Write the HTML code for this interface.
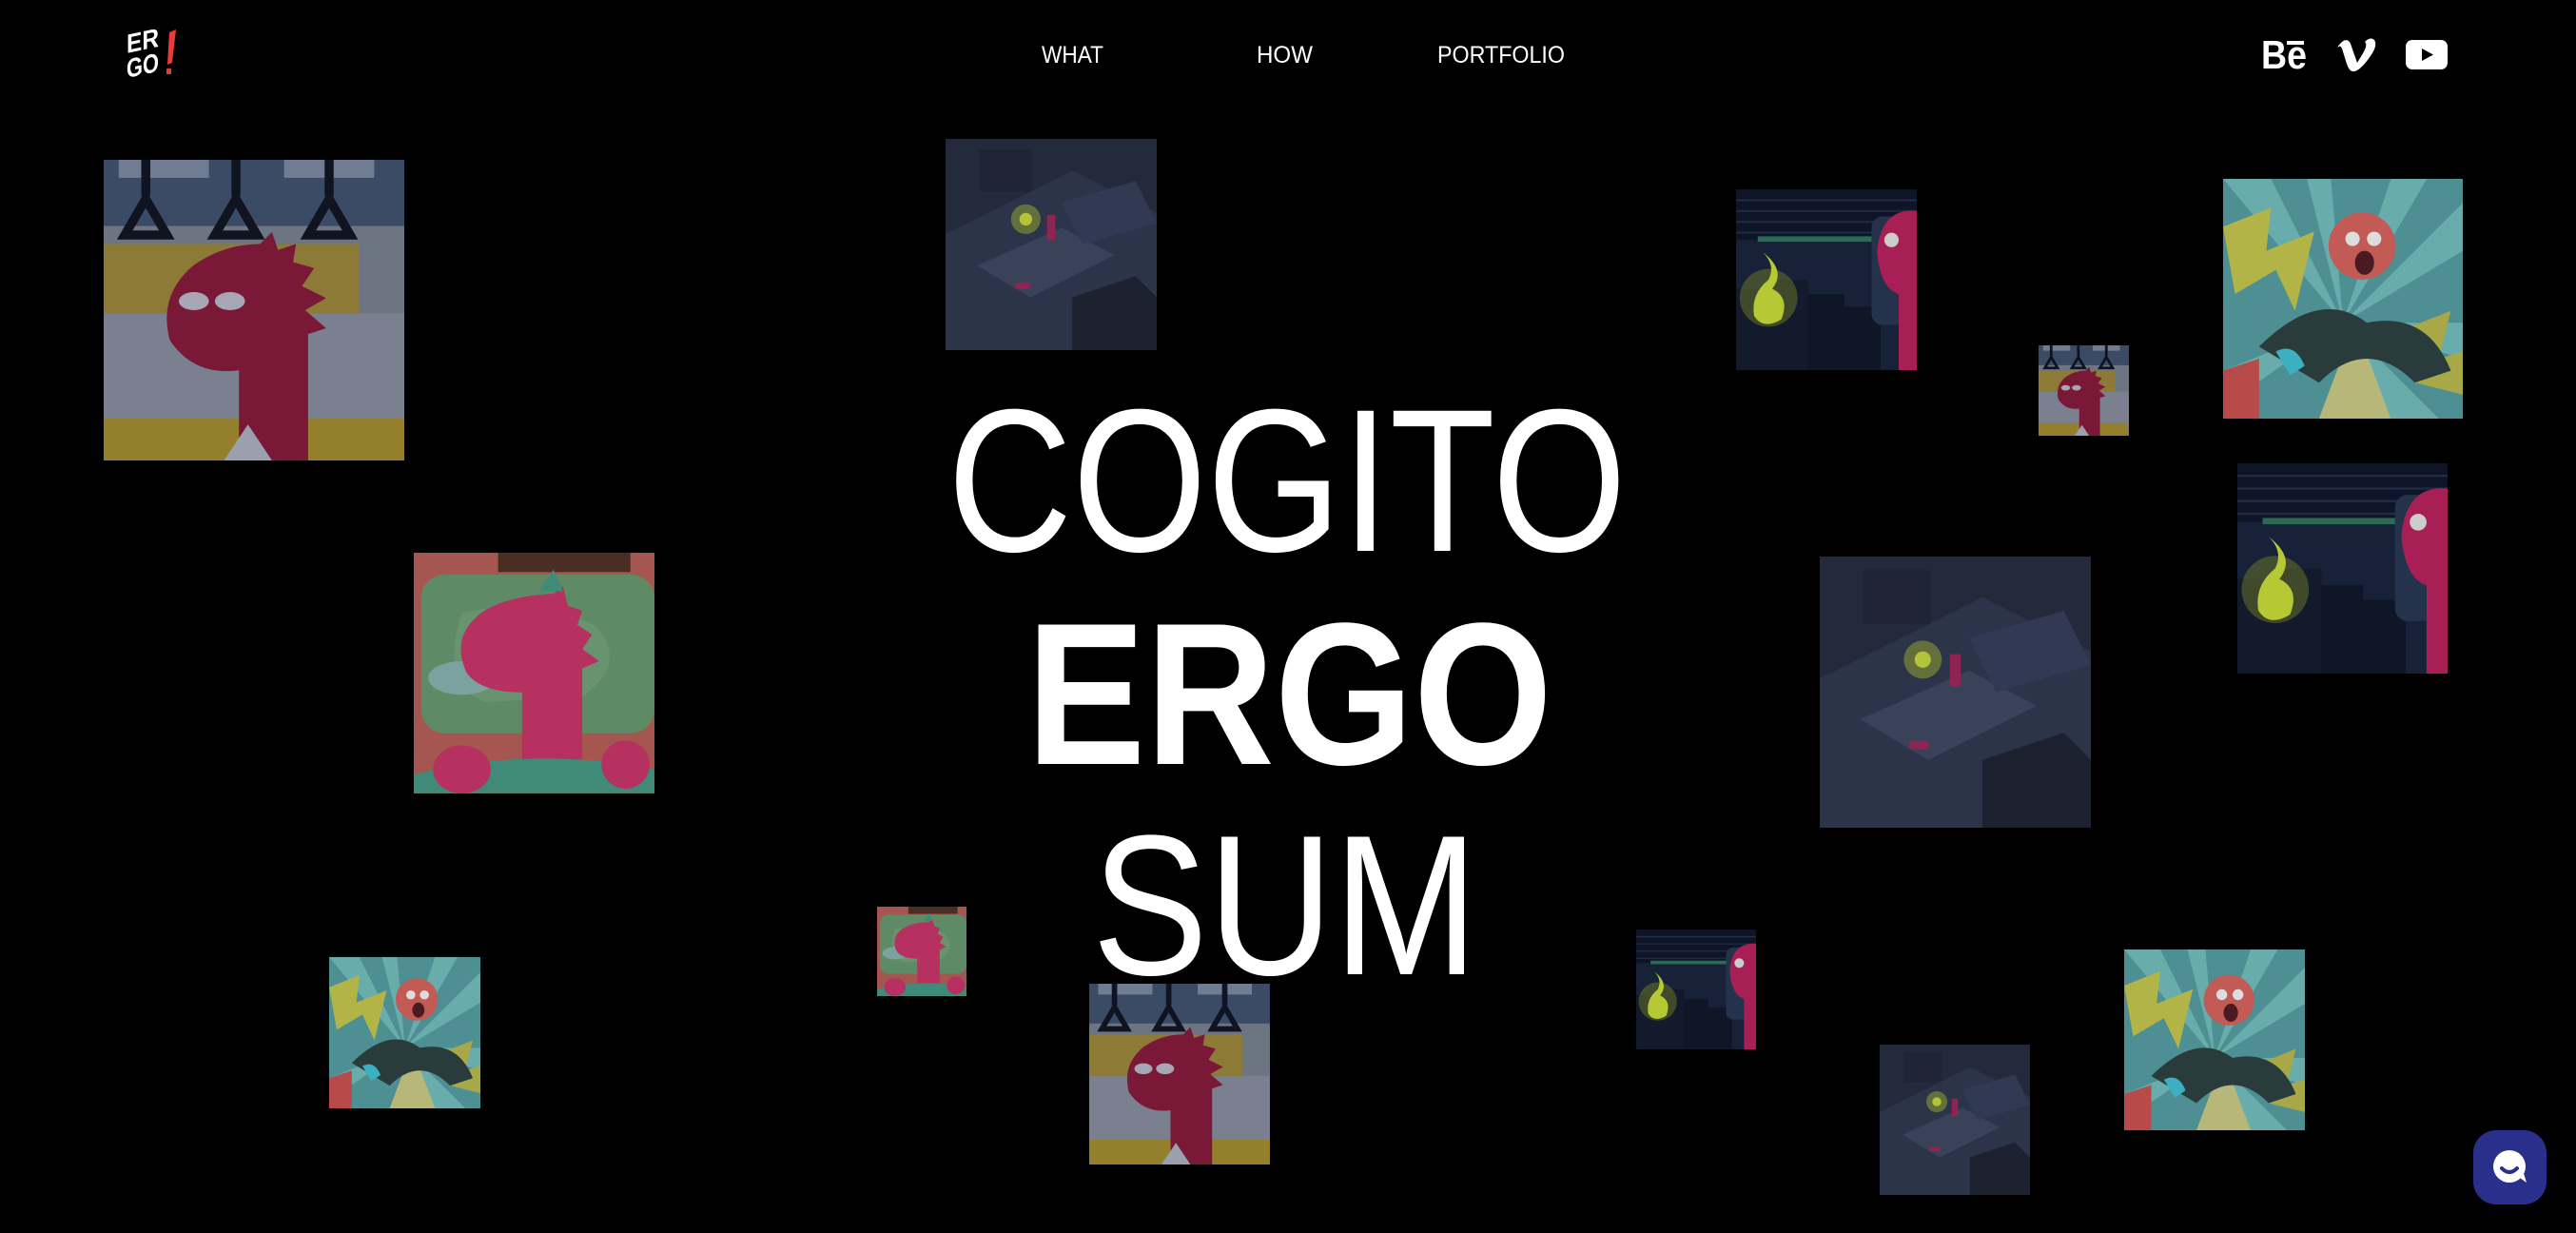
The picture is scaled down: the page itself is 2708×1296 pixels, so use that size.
<!DOCTYPE html>
<html><head><meta charset="utf-8"><style>
html,body{margin:0;padding:0;background:#000;width:2708px;height:1296px;overflow:hidden}
svg{display:block}
</style></head><body>
<svg width="2708" height="1296" viewBox="0 0 2708 1296" xmlns="http://www.w3.org/2000/svg">
<defs>
<symbol id="sub" viewBox="0 0 100 100" preserveAspectRatio="none">
<rect width="100" height="100" fill="#6d7482"/>
<rect width="100" height="22" fill="#3b4b66"/>
<rect x="5" y="0" width="30" height="6" fill="#6f7c92"/><rect x="60" y="0" width="30" height="6" fill="#6f7c92"/>
<rect x="0" y="28" width="85" height="23" fill="#8c7a36"/>
<rect x="0" y="51" width="100" height="36" fill="#7b8090"/>
<rect x="0" y="86" width="100" height="14" fill="#94802c"/>
<g fill="none" stroke="#101420" stroke-width="3"><path d="M14 0V12M44 0V12M75 0V12"/><path d="M14 13L7 25H21Z"/><path d="M44 13L37 25H51Z"/><path d="M75 13L68 25H82Z"/></g>
<path d="M45 100V70Q30 72 22 60Q18 45 30 35Q40 28 52 28L56 24L58 30L64 28L63 34L70 36L66 42L74 46L67 50L74 56L68 58V100Z" fill="#7a1838"/>
<ellipse cx="30" cy="47" rx="5" ry="3" fill="#a7a6b5"/><ellipse cx="42" cy="47" rx="5" ry="3" fill="#a7a6b5"/>
<path d="M40 100L48 88L56 100Z" fill="#9aa0ad"/>
</symbol>
<symbol id="off" viewBox="0 0 100 100" preserveAspectRatio="none">
<rect width="100" height="100" fill="#232a3c"/>
<path d="M0 45L60 15L100 35V100H0Z" fill="#2c344a"/>
<path d="M15 60L55 42L80 55L40 75Z" fill="#394259"/>
<path d="M55 30L90 20L100 40L65 50Z" fill="#313a52"/>
<rect x="16" y="5" width="25" height="20" fill="#1f2536"/>
<circle cx="38" cy="38" r="7" fill="#7b8a36" opacity=".7"/><circle cx="38" cy="38" r="3" fill="#b4c43a"/>
<rect x="48" y="36" width="4" height="12" fill="#8e2452"/>
<rect x="33" y="68" width="7" height="3" fill="#8e2452"/>
<path d="M60 75L90 65L100 75V100H60Z" fill="#1c2230"/>
</symbol>
<symbol id="nig" viewBox="0 0 100 100" preserveAspectRatio="none">
<rect width="100" height="100" fill="#172238"/>
<rect width="100" height="28" fill="#0e1528"/>
<g stroke="#222c44" stroke-width="1"><path d="M0 6H100M0 12H100M0 18H100M0 24H100"/></g>
<rect x="12" y="26" width="70" height="3" fill="#2b6a55"/>
<path d="M0 75V55H20V50H40V60H55V100H0Z" fill="#121a2c"/>
<path d="M40 100V58H60V65H80V100Z" fill="#0f1626"/>
<circle cx="18" cy="60" r="16" fill="#6d7a28" opacity=".5"/>
<path d="M15 35Q28 45 20 55Q30 60 25 72Q15 78 10 70Q8 58 18 50Q22 42 15 35Z" fill="#b6c934"/>
<rect x="75" y="15" width="25" height="60" rx="6" fill="#24324c"/>
<path d="M100 12Q80 10 78 35Q80 55 90 58V100H100Z" fill="#a71f55"/>
<circle cx="86" cy="28" r="4" fill="#ccc"/>
</symbol>
<symbol id="bur" viewBox="0 0 100 100" preserveAspectRatio="none">
<rect width="100" height="100" fill="#4d8f93"/>
<path d="M50 60L0 0H20ZM50 60L35 0H45ZM50 60L70 0H85ZM50 60L100 10V30ZM50 60L100 60V75ZM50 60L90 100H70ZM50 60L0 80V95Z" fill="#7cc0bb" opacity=".6"/>
<path d="M0 20L20 12L18 30L38 22L30 55L22 38L5 48Z" fill="#b3b448"/>
<path d="M70 65L95 55L90 75L100 72V90L80 85Z" fill="#a8a848"/>
<path d="M40 100L55 60L70 100Z" fill="#b7b77a"/>
<circle cx="58" cy="28" r="14" fill="#c25a55"/>
<circle cx="54" cy="25" r="3" fill="#ddd"/><circle cx="63" cy="25" r="3" fill="#ddd"/>
<ellipse cx="59" cy="35" rx="4" ry="5" fill="#4a1a22"/>
<path d="M15 70Q40 45 60 60Q85 55 95 80L80 85Q60 65 40 85Z" fill="#2a3b3c"/>
<path d="M22 72Q30 68 34 78L28 82Z" fill="#3ab0c0"/>
<path d="M0 80L15 75L15 100H0Z" fill="#b84a4a"/>
</symbol>
<symbol id="grn" viewBox="0 0 100 100" preserveAspectRatio="none">
<rect width="100" height="100" fill="#a55650"/>
<rect x="35" y="0" width="55" height="8" fill="#4a2e24"/>
<rect x="3" y="9" width="97" height="66" rx="10" fill="#5f8a66"/>
<path d="M20 25Q50 18 75 30Q90 45 70 60L30 62Q10 55 20 25Z" fill="#6f9774" opacity=".6"/>
<ellipse cx="20" cy="52" rx="14" ry="7" fill="#7aa3a0"/>
<path d="M45 90V58Q28 58 22 50Q15 35 28 25Q38 18 58 17L62 14L64 22L70 24L68 30L74 34L70 40L77 45L70 48V90Z" fill="#b63060"/>
<path d="M52 16L58 7L62 16Z" fill="#3f8a78"/>
<path d="M0 92Q50 80 100 90V100H0Z" fill="#3f8a78"/>
<ellipse cx="20" cy="90" rx="12" ry="10" fill="#b63060"/>
<ellipse cx="88" cy="88" rx="10" ry="10" fill="#b63060"/>
</symbol>
</defs>

<use href="#sub" x="109" y="168" width="316" height="316"/>
<use href="#off" x="994" y="146" width="222" height="222"/>
<use href="#nig" x="1825" y="199" width="190" height="190"/>
<use href="#bur" x="2337" y="188" width="252" height="252"/>
<use href="#sub" x="2143" y="363" width="95" height="95"/>
<use href="#nig" x="2352" y="487" width="221" height="221"/>
<use href="#grn" x="435" y="581" width="253" height="253"/>
<use href="#off" x="1913" y="585" width="285" height="285"/>
<use href="#grn" x="922" y="953" width="94" height="94"/>
<use href="#bur" x="346" y="1006" width="159" height="159"/>
<use href="#sub" x="1145" y="1034" width="190" height="190"/>
<use href="#nig" x="1720" y="977" width="126" height="126"/>
<use href="#bur" x="2233" y="998" width="190" height="190"/>
<use href="#off" x="1976" y="1098" width="158" height="158"/>

<g fill="#fff" font-family="Liberation Sans, sans-serif">
<text x="996" y="579" font-size="214" textLength="714" lengthAdjust="spacingAndGlyphs">COGITO</text>
<text x="1079" y="803" font-size="213" font-weight="bold" textLength="553" lengthAdjust="spacingAndGlyphs">ERGO</text>
<text x="1148" y="1024" font-size="210" textLength="406" lengthAdjust="spacingAndGlyphs">SUM</text>
</g>

<g fill="#fff" font-family="Liberation Sans, sans-serif" font-size="25">
<text x="1095" y="66" textLength="65" lengthAdjust="spacingAndGlyphs">WHAT</text>
<text x="1321" y="66" textLength="59" lengthAdjust="spacingAndGlyphs">HOW</text>
<text x="1511" y="66" textLength="134" lengthAdjust="spacingAndGlyphs">PORTFOLIO</text>
</g>

<g font-family="Liberation Sans, sans-serif" font-weight="bold" fill="#fff">
<g transform="translate(133,56) skewY(-12)"><text x="0" y="0" font-size="28" textLength="34" lengthAdjust="spacingAndGlyphs">ER</text></g>
<g transform="translate(133,82) skewY(-12)"><text x="0" y="0" font-size="28" textLength="34" lengthAdjust="spacingAndGlyphs">GO</text></g>
<path d="M178 34L185 31L181 66L176 68Z" fill="#e83a3a"/>
<rect x="175" y="72" width="5" height="6" fill="#e83a3a"/>
</g>

<text x="2377" y="72" fill="#fff" font-family="Liberation Sans, sans-serif" font-weight="bold" font-size="42" textLength="48" lengthAdjust="spacingAndGlyphs">Be</text>
<rect x="2404" y="43" width="18" height="4" fill="#fff"/>
<path d="M2457 50C2462 42 2468 39 2471 46L2478 66C2484 56 2490 48 2486 44C2494 36 2501 43 2495 54C2489 64 2481 74 2475 75C2470 76 2468 70 2466 64L2462 51C2460 47 2459 49 2457 50Z" fill="#fff"/>
<rect x="2529" y="42" width="44" height="31" rx="7" fill="#fff"/>
<path d="M2546 51L2558 57.5L2546 64Z" fill="#000"/>

<rect x="2600" y="1188" width="77" height="78" rx="24" fill="#2b2f8c"/>
<circle cx="2638" cy="1226" r="17" fill="#fff"/>
<path d="M2646 1236L2656 1243L2652 1230Z" fill="#fff"/>
<path d="M2630 1228Q2638 1236 2646 1228" stroke="#2b2f8c" stroke-width="4" fill="none" stroke-linecap="round"/>
</svg>
</body></html>
